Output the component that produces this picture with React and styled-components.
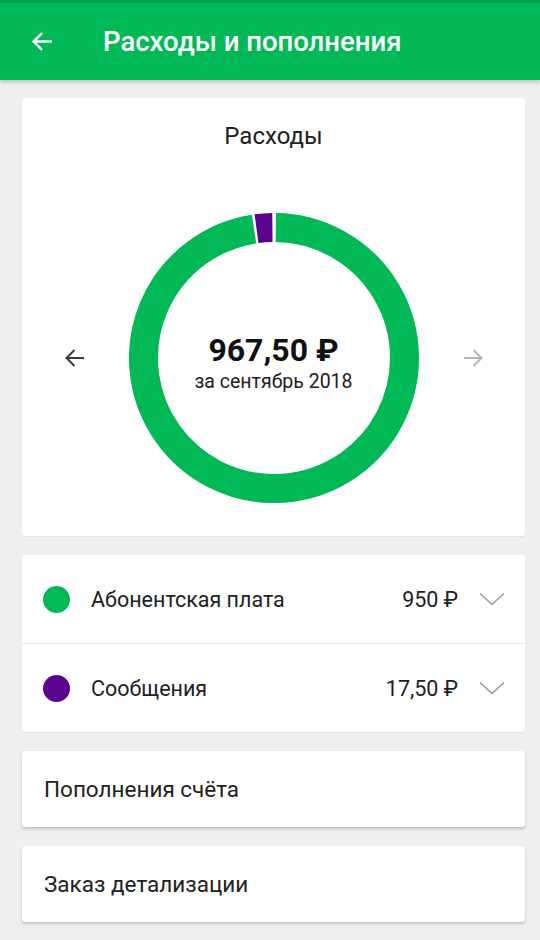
import React from "react";
import styled, { createGlobalStyle } from "styled-components";

const GlobalStyle = createGlobalStyle`
  html, body {
    margin: 0;
    padding: 0;
    background: #efefef;
    font-family: Roboto, "Noto Sans", "Liberation Sans", sans-serif;
    color: #212121;
  }
`;

const GREEN = "#00b956";
const PURPLE = "#59038f";

const Page = styled.div`
  width: 540px;
  min-height: 940px;
  background: #efefef;
`;

const Header = styled.header`
  height: 77px;
  border-top: 3px solid #00a34b;
  background: ${GREEN};
  display: flex;
  align-items: center;
  padding-left: 30px;
  box-shadow: 0 2px 4px rgba(0, 0, 0, 0.22);
  position: relative;
  z-index: 1;
`;

const Title = styled.h1`
  margin: 0 0 0 48px;
  font-size: 27.5px;
  font-weight: 500;
  color: #fff;
`;

const Content = styled.main`
  display: flex;
  flex-direction: column;
  gap: 19px;
  padding: 18px 15px 18px 22px;
`;

const Card = styled.section`
  background: #fff;
  border-radius: 3px;
  box-shadow: ${({ $raised }) =>
    $raised ? "0 2px 3px rgba(0, 0, 0, 0.2)" : "0 1px 1px rgba(0, 0, 0, 0.06)"};
`;

const ChartCard = styled(Card)`
  display: flex;
  flex-direction: column;
  align-items: center;
  padding: 24px 0 33px;
`;

const ChartTitle = styled.h2`
  margin: 0;
  font-size: 24px;
  font-weight: 400;
  line-height: 28px;
`;

const ChartRow = styled.div`
  margin-top: 63px;
  display: flex;
  align-items: center;
  gap: 42px;
`;

const NavButton = styled.button`
  border: 0;
  background: none;
  padding: 0;
  width: 24px;
  height: 24px;
  display: flex;
  color: ${({ $disabled }) => ($disabled ? "#b3b3b3" : "#3c3c3c")};
`;

const Donut = styled.div`
  position: relative;
  width: 290px;
  height: 290px;
`;

const DonutCenter = styled.div`
  position: absolute;
  inset: 0;
  display: flex;
  flex-direction: column;
  align-items: center;
  justify-content: center;
  padding-top: 10px;
  box-sizing: border-box;
`;

const Total = styled.div`
  font-size: 32px;
  font-weight: 700;
  line-height: 36px;
  color: #111;
`;

const Period = styled.div`
  font-size: 19.5px;
  line-height: 24px;
  margin-top: 2px;
`;

const Row = styled.div`
  height: 88px;
  display: flex;
  align-items: center;
  padding: 0 20px 0 21px;
  & + & {
    border-top: 1px solid #ebebeb;
  }
`;

const Dot = styled.span`
  width: 27px;
  height: 27px;
  border-radius: 50%;
  background: ${({ $color }) => $color};
  flex: none;
`;

const RowLabel = styled.span`
  margin-left: 21px;
  flex: 1;
  font-size: 21.5px;
`;

const RowAmount = styled.span`
  font-size: 21.5px;
  margin-right: 21px;
`;

const Chevron = styled.svg`
  width: 26px;
  height: 14px;
  flex: none;
`;

const LinkCard = styled(Card)`
  height: 76px;
  display: flex;
  align-items: center;
  padding-left: 22px;
  font-size: 22.5px;
`;

const polar = (a, r) => {
  const rad = ((a - 90) * Math.PI) / 180;
  return [145 + r * Math.cos(rad), 145 + r * Math.sin(rad)];
};

const arc = (from, to, r = 130.5) => {
  const [x1, y1] = polar(from, r);
  const [x2, y2] = polar(to, r);
  const large = to - from > 180 ? 1 : 0;
  return `M ${x1} ${y1} A ${r} ${r} 0 ${large} 1 ${x2} ${y2}`;
};

const segments = [
  { from: 0.8, to: 351.2, color: GREEN },
  { from: 352.3, to: 359.3, color: PURPLE },
];

const Arrow = ({ dir }) => (
  <svg viewBox="0 0 24 24" width="24" height="24" fill="none" stroke="currentColor" strokeWidth="2">
    {dir === "left" ? (
      <path d="M21 12H3.5M11.5 4l-8 8 8 8" />
    ) : (
      <path d="M3 12h17.5M12.5 4l8 8-8 8" />
    )}
  </svg>
);

const items = [
  { label: "Абонентская плата", amount: "950 ₽", color: GREEN },
  { label: "Сообщения", amount: "17,50 ₽", color: PURPLE },
];

export default function App() {
  return (
    <Page>
      <GlobalStyle />
      <Header>
        <svg viewBox="0 0 24 24" width="25" height="25" fill="none" stroke="#fff" strokeWidth="2.4">
          <path d="M21 12H3.5M11.5 4l-8 8 8 8" />
        </svg>
        <Title>Расходы и пополнения</Title>
      </Header>
      <Content>
        <ChartCard>
          <ChartTitle>Расходы</ChartTitle>
          <ChartRow>
            <NavButton>
              <Arrow dir="left" />
            </NavButton>
            <Donut>
              <svg width="290" height="290" viewBox="0 0 290 290">
                {segments.map((s) => (
                  <path key={s.color} d={arc(s.from, s.to)} stroke={s.color} strokeWidth="29" fill="none" />
                ))}
              </svg>
              <DonutCenter>
                <Total>967,50 ₽</Total>
                <Period>за сентябрь 2018</Period>
              </DonutCenter>
            </Donut>
            <NavButton $disabled>
              <Arrow dir="right" />
            </NavButton>
          </ChartRow>
        </ChartCard>

        <Card>
          {items.map((it) => (
            <Row key={it.label}>
              <Dot $color={it.color} />
              <RowLabel>{it.label}</RowLabel>
              <RowAmount>{it.amount}</RowAmount>
              <Chevron viewBox="0 0 26 14" fill="none" stroke="#9a9a9a" strokeWidth="1.6">
                <path d="M1 1.5l12 11 12-11" />
              </Chevron>
            </Row>
          ))}
        </Card>

        <LinkCard $raised>Пополнения счёта</LinkCard>
        <LinkCard $raised>Заказ детализации</LinkCard>
      </Content>
    </Page>
  );
}
